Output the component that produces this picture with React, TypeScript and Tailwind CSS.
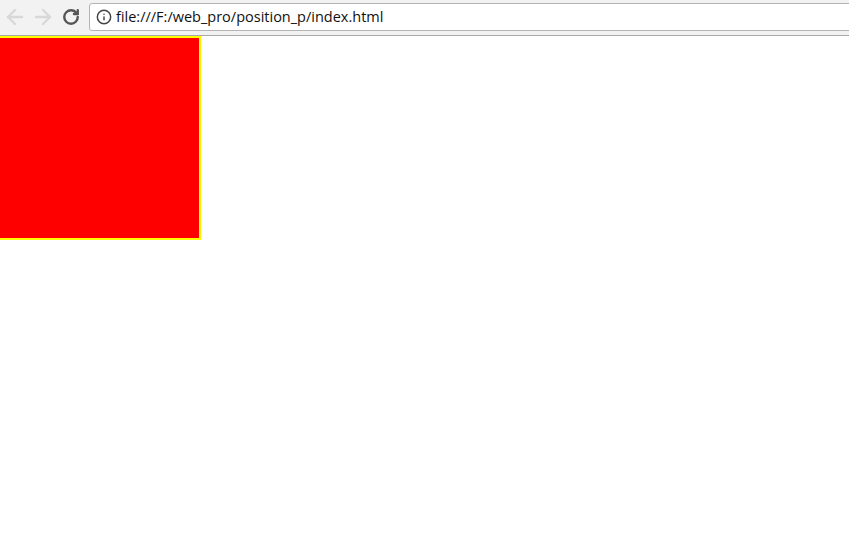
import { ArrowLeft, ArrowRight, Info, RotateCw } from "lucide-react";

export default function App() {
  return (
    <div className="h-[553px] w-[849px] overflow-hidden bg-white font-['Open_Sans',sans-serif]">
      {/* browser toolbar */}
      <div className="flex h-9 items-center border-b border-[#a8a8a8] bg-[#f2f2f2] pt-[3px] pb-1">
        <div className="flex w-[89px] shrink-0 items-center pl-[1px]">
          <div className="flex w-7 justify-center">
            <ArrowLeft className="size-6 text-[#d8d8d8]" strokeWidth={2.4} />
          </div>
          <div className="flex w-7 justify-center">
            <ArrowRight className="size-6 text-[#d8d8d8]" strokeWidth={2.4} />
          </div>
          <div className="flex w-7 justify-center">
            <RotateCw className="size-[18px] text-[#555555]" strokeWidth={3.2} />
          </div>
        </div>
        <div className="-mr-2 flex h-7 flex-1 items-center rounded-[3px] border border-[#b4b4b4] bg-white pl-[6px]">
          <Info className="size-4 text-[#444444]" strokeWidth={2.2} />
          <span className="ml-1 text-[14.5px] leading-none text-[#111111]">
            file:///F:/web_pro/position_p/index.html
          </span>
        </div>
      </div>

      {/* page content */}
      <div className="-ml-[3px] h-[204px] w-[204px] border-2 border-[#ffff00] bg-[#ff0000]" />
    </div>
  );
}
